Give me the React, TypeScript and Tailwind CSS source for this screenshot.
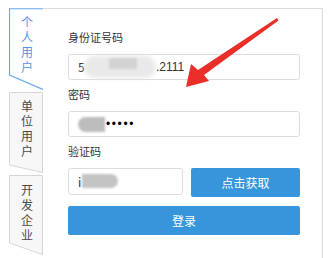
import React from "react";

const font = { fontFamily: '"Noto Sans CJK SC", "Noto Sans", sans-serif' };

function Tab({
  text,
  h,
  left,
  active,
  pt,
}: {
  text: string;
  h: number;
  left: number;
  active?: boolean;
  pt: string;
}) {
  return (
    <div className="relative w-[34px] shrink-0" style={{ height: h }}>
      <svg className="absolute inset-0" width="34" height={h} viewBox={`0 0 34 ${h}`}>
        {active ? (
          <>
            <polygon points={`0,0 34,0 34,${h} 0,${left}`} fill="#ffffff" />
            <polyline
              points={`34,0.75 0.5,0.75 0.5,${left} 34,${h - 0.5}`}
              fill="none"
              stroke="#6aa9f2"
              strokeWidth="1.2"
            />
          </>
        ) : (
          <polygon
            points={`0.5,0.5 33.5,0.5 33.5,${h - 0.5} 0.5,${left}`}
            fill="#f7f7f7"
            stroke="#d6d6d6"
            strokeWidth="1"
          />
        )}
      </svg>
      <div className={`relative flex justify-center ${pt} pl-[1px]`}>
        <span
          className={`[writing-mode:vertical-lr] text-[12px] leading-[14px] tracking-[3px] ${
            active ? "text-[#4f93e8]" : "text-[#4a4a4a]"
          }`}
        >
          {text}
        </span>
      </div>
    </div>
  );
}

export default function App() {
  return (
    <div
      className="relative w-[330px] h-[258px] bg-white overflow-hidden flex pt-[8px] pl-[9px]"
      style={font}
    >
      <div className="flex flex-col w-[34px] shrink-0">
        <Tab text="个人用户" h={82} left={67} active pt="pt-[8px]" />
        <div className="h-[2px]" />
        <Tab text="单位用户" h={81} left={73} pt="pt-[8px]" />
        <div className="h-[2px]" />
        <Tab text="开发企业" h={80} left={68} pt="pt-[9px]" />
      </div>

      <div className="w-[280px] h-[300px] border-t border-r border-[#dcdcdc] pl-[25px] pt-[20px]">
        <div className="w-[232px] flex flex-col">
          <div className="text-[11px] leading-[16px] text-[#333] mb-[9px]">身份证号码</div>
          <div className="relative h-[26px] border border-[#dddddd] rounded-[3px] flex items-center pl-[9px] text-[12px] text-[#333]">
            <span>5</span>
            <div className="absolute left-[15px] top-[1px] w-[72px] h-[22px] rounded-full bg-[#e9e9e9] blur-[2px]" />
            <div className="absolute left-[40px] top-[3px] w-[28px] h-[11px] bg-[#d3d3d3] blur-[1px]" />
            <span className="absolute left-[87px]" style={{ fontFamily: '"Liberation Sans", sans-serif' }}>
              .2111
            </span>
          </div>

          <div className="text-[11px] leading-[16px] text-[#333] mt-[6px] mb-[9px]">密码</div>
          <div className="relative h-[26px] border border-[#dddddd] rounded-[3px] flex items-center pl-[9px]">
            <div className="w-[27px] h-[15px] rounded-l-full rounded-r-[6px] bg-[#bdbdbd] blur-[1px]" />
            <span
              className="text-[12px] tracking-[1.6px] text-black pl-[1px]"
              style={{ fontFamily: '"Liberation Sans", sans-serif' }}
            >
              •••••
            </span>
          </div>

          <div className="text-[11px] leading-[16px] text-[#333] mt-[6px] mb-[9px]">验证码</div>
          <div className="flex gap-[8px] items-start">
            <div className="relative w-[115px] h-[27px] border border-[#dddddd] rounded-[3px] flex items-center pl-[9px] text-[12px] text-[#333]">
              <span>i</span>
              <div className="absolute left-[13px] top-[5px] w-[36px] h-[14px] rounded-r-full bg-[#c4c4c4] blur-[1px]" />
            </div>
            <div className="w-[109px] h-[29px] bg-[#3796db] rounded-[2px] flex items-center justify-center text-white text-[12px]">
              点击获取
            </div>
          </div>

          <div className="mt-[9px] h-[29px] bg-[#3796db] rounded-[2px] flex items-center justify-center text-white text-[12px]">
            登录
          </div>
        </div>
      </div>

      <svg className="absolute left-0 top-0" width="330" height="258" viewBox="0 0 330 258">
        <polygon
          points="277,18 278.5,20.5 204,75 209,81 186,87 191,64 198,70"
          fill="#ea2f2b"
        />
      </svg>
    </div>
  );
}
